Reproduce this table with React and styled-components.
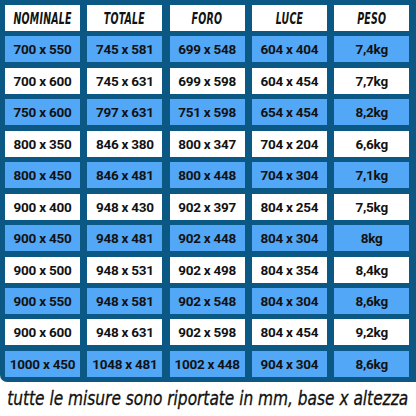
import React from "react";
import styled, { createGlobalStyle } from "styled-components";

const GlobalStyle = createGlobalStyle`
  html, body {
    margin: 0;
    padding: 0;
    background: #ffffff;
    overflow: hidden;
  }
`;

const Page = styled.div`
  width: 416px;
  height: 416px;
  display: flex;
  flex-direction: column;
`;

const Panel = styled.div`
  width: 416px;
  height: 382px;
  box-sizing: border-box;
  background: #0c5884;
  border-radius: 0 0 0 7px;
  padding: 5px 0 0 5px;
  overflow: hidden;
`;

const Grid = styled.div`
  display: grid;
  grid-template-columns: repeat(6, 75px);
  grid-auto-rows: 26px;
  column-gap: 7.3px;
  row-gap: 5.45px;
`;

const Cell = styled.div`
  display: flex;
  align-items: center;
  justify-content: center;
  background: ${({ $blue }) => ($blue ? "#52a7f6" : "#ffffff")};
  color: #121212;
  font-family: Roboto, "Liberation Sans", sans-serif;
  font-weight: 700;
  font-size: 13.5px;
  letter-spacing: -0.25px;
  white-space: nowrap;
`;

const HeadCell = styled(Cell)`
  padding-top: 1px;
`;

const HeadText = styled.span`
  display: inline-block;
  font-family: "DejaVu Sans Condensed", "DejaVu Sans", sans-serif;
  font-stretch: condensed;
  font-style: italic;
  font-weight: 700;
  font-size: 15px;
  letter-spacing: 0.3px;
  transform: scaleX(0.7);
`;

const Note = styled.div`
  display: flex;
  justify-content: center;
  padding-top: 5px;
`;

const NoteText = styled.span`
  display: inline-block;
  font-family: "DejaVu Sans Condensed", "DejaVu Sans", sans-serif;
  font-stretch: condensed;
  font-style: italic;
  font-size: 19px;
  color: #111;
  white-space: nowrap;
  transform: scaleX(0.9);
  -webkit-text-stroke: 0.3px #111;
`;

const headers = ["NOMINALE", "TOTALE", "FORO", "LUCE", "PESO", ""];

const rows = [
  ["700 x 550", "745 x 581", "699 x 548", "604 x 404", "7,4kg"],
  ["700 x 600", "745 x 631", "699 x 598", "604 x 454", "7,7kg"],
  ["750 x 600", "797 x 631", "751 x 598", "654 x 454", "8,2kg"],
  ["800 x 350", "846 x 380", "800 x 347", "704 x 204", "6,6kg"],
  ["800 x 450", "846 x 481", "800 x 448", "704 x 304", "7,1kg"],
  ["900 x 400", "948 x 430", "902 x 397", "804 x 254", "7,5kg"],
  ["900 x 450", "948 x 481", "902 x 448", "804 x 304", "8kg"],
  ["900 x 500", "948 x 531", "902 x 498", "804 x 354", "8,4kg"],
  ["900 x 550", "948 x 581", "902 x 548", "804 x 304", "8,6kg"],
  ["900 x 600", "948 x 631", "902 x 598", "804 x 454", "9,2kg"],
  ["1000 x 450", "1048 x 481", "1002 x 448", "904 x 304", "8,6kg"],
];

export default function App() {
  return (
    <Page>
      <GlobalStyle />
      <Panel>
        <Grid>
          {headers.map((h, i) => (
            <HeadCell key={"h" + i}>
              <HeadText>{h}</HeadText>
            </HeadCell>
          ))}
          {rows.map((r, ri) =>
            [...r, ""].map((v, ci) => (
              <Cell key={ri + "-" + ci} $blue={ri % 2 === 0}>
                {v}
              </Cell>
            ))
          )}
        </Grid>
      </Panel>
      <Note>
        <NoteText>tutte le misure sono riportate in mm, base x altezza</NoteText>
      </Note>
    </Page>
  );
}
